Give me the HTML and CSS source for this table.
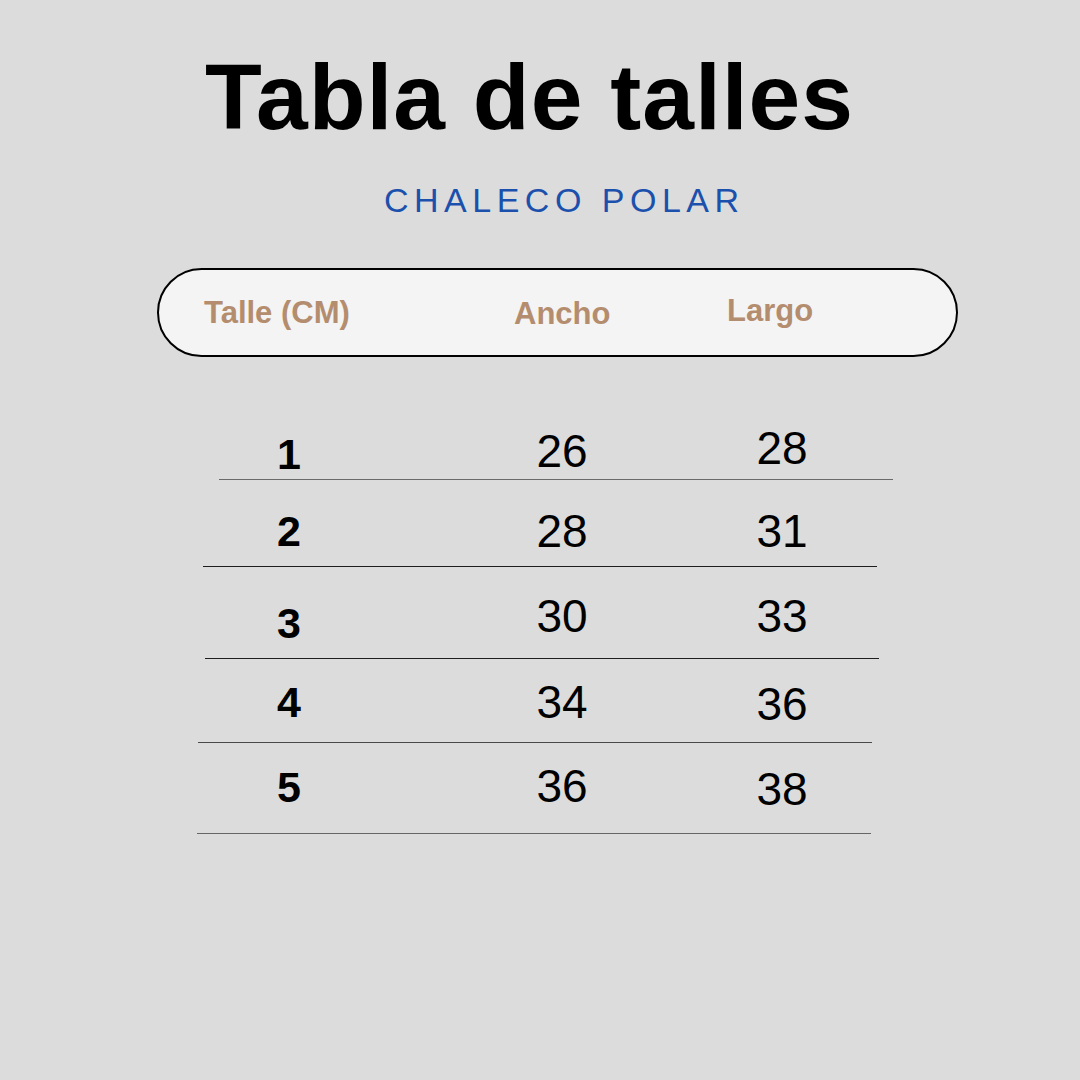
FILE: index.html
```html
<!DOCTYPE html>
<html lang="es">
<head>
<meta charset="utf-8">
<title>Tabla de talles</title>
<link rel="stylesheet" href="styles.css">
</head>
<body>
<main class="page">
  <h1 class="title">Tabla de talles</h1>
  <p class="subtitle">CHALECO POLAR</p>

  <div class="pill">
    <span class="head">Talle (CM)</span>
    <span class="head head-mid">Ancho</span>
    <span class="head head-up">Largo</span>
  </div>

  <section class="table">
    <div class="cells r1">
      <span class="num dn3">1</span>
      <span class="val">26</span>
      <span class="val up3">28</span>
    </div>
    <div class="rule rule1"></div>

    <div class="cells r2">
      <span class="num">2</span>
      <span class="val">28</span>
      <span class="val">31</span>
    </div>
    <div class="rule rule2"></div>

    <div class="cells r3">
      <span class="num dn7">3</span>
      <span class="val">30</span>
      <span class="val">33</span>
    </div>
    <div class="rule rule3"></div>

    <div class="cells r4">
      <span class="num">4</span>
      <span class="val">34</span>
      <span class="val dn2">36</span>
    </div>
    <div class="rule rule4"></div>

    <div class="cells r5">
      <span class="num dn1">5</span>
      <span class="val">36</span>
      <span class="val dn3">38</span>
    </div>
    <div class="rule rule5"></div>
  </section>
</main>
</body>
</html>
```

FILE: styles.css
```css
* { box-sizing: border-box; }

html, body {
  margin: 0;
  padding: 0;
}

body {
  width: 1080px;
  height: 1080px;
  background: #dcdcdc;
  font-family: "Liberation Sans", Arial, sans-serif;
  color: #000;
  overflow: hidden;
}

.page {
  display: flex;
  flex-direction: column;
  align-items: flex-start;
}

.title {
  margin: 47px 0 0 205px;
  font-size: 93px;
  line-height: 100px;
  font-weight: 700;
  letter-spacing: 1px;
  white-space: nowrap;
}

.subtitle {
  margin: 33px 0 0 384px;
  font-size: 34px;
  line-height: 40px;
  font-weight: 400;
  letter-spacing: 5.5px;
  color: #1b50ad;
  white-space: nowrap;
}

.pill {
  margin: 48px 0 0 157px;
  width: 801px;
  height: 89px;
  border: 2px solid #000;
  border-radius: 45px;
  background: #f4f4f4;
  display: grid;
  grid-template-columns: 310px 213px auto;
  padding-left: 45px;
}

.head {
  font-size: 31px;
  line-height: 85px;
  font-weight: 700;
  color: #b48d6f;
  white-space: nowrap;
}

.head-mid { margin-top: 1px; }
.head-up { margin-top: -2px; }

.table {
  display: flex;
  flex-direction: column;
  align-items: flex-start;
}

.cells {
  margin-left: 180px;
  display: grid;
  grid-template-columns: 218px 328px 112px;
  grid-auto-rows: 50px;
  text-align: center;
  line-height: 50px;
}

.num {
  font-size: 43px;
  font-weight: 700;
}

.val {
  font-size: 46px;
  font-weight: 400;
}

.up3 { margin-top: -3px; }
.dn1 { margin-top: 1px; }
.dn2 { margin-top: 2px; }
.dn3 { margin-top: 3px; }
.dn7 { margin-top: 7px; }

.r1 { margin-top: 69px; }
.r2 { margin-top: 26px; }
.r3 { margin-top: 24px; }
.r4 { margin-top: 18px; }
.r5 { margin-top: 18px; }

.rule {
  width: 674px;
  height: 1px;
}

.rule1 { margin: 3px 0 0 219px; background: #6a6a6a; }
.rule2 { margin: 10px 0 0 203px; background: #1e1e1e; }
.rule3 { margin: 17px 0 0 205px; background: #1e1e1e; }
.rule4 { margin: 15px 0 0 198px; background: #4a4a4a; }
.rule5 { margin: 22px 0 0 197px; background: #666; }
```
